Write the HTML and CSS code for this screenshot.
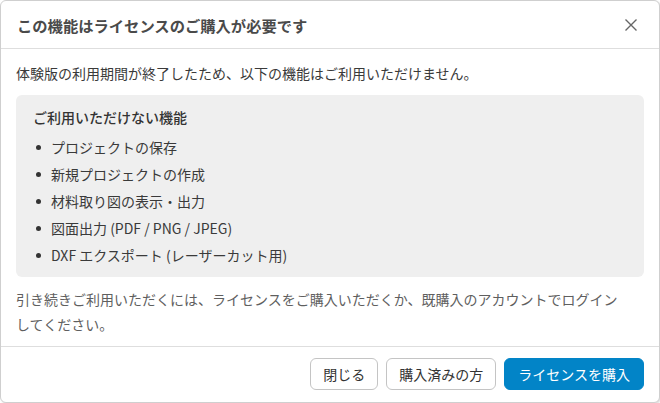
FILE: index.html
```html
<!DOCTYPE html>
<html lang="ja">
<head>
<meta charset="UTF-8">
<meta name="viewport" content="width=device-width, initial-scale=1.0">
<title>ライセンスのご購入</title>
<link rel="stylesheet" href="styles.css">
</head>
<body>
<div class="dialog">
    <div class="dialog-header">
        <h2>この機能はライセンスのご購入が必要です</h2>
        <button class="close" aria-label="閉じる">
            <svg width="14" height="14" viewBox="0 0 14 14">
                <path d="M1.5 1.5 L12.5 12.5 M12.5 1.5 L1.5 12.5" stroke="#666" stroke-width="1.4" fill="none"/>
            </svg>
        </button>
    </div>
    <div class="dialog-body">
        <p class="lead">体験版の利用期間が終了したため、以下の機能はご利用いただけません。</p>
        <div class="locked">
            <h3>ご利用いただけない機能</h3>
            <ul>
                <li>プロジェクトの保存</li>
                <li>新規プロジェクトの作成</li>
                <li>材料取り図の表示・出力</li>
                <li>図面出力 (PDF / PNG / JPEG)</li>
                <li>DXF エクスポート (レーザーカット用)</li>
            </ul>
        </div>
        <p class="note">引き続きご利用いただくには、ライセンスをご購入いただくか、既購入のアカウントでログインしてください。</p>
    </div>
    <div class="dialog-footer">
        <button class="btn">閉じる</button>
        <button class="btn">購入済みの方</button>
        <button class="btn primary">ライセンスを購入</button>
    </div>
</div>
</body>
</html>
```

FILE: styles.css
```css
html, body {
    margin: 0;
    height: 100%;
    background-color: #fff;
    font-family: "Noto Sans CJK JP", "Noto Sans", sans-serif;
    color: #3f3f3f;
}

.dialog {
    box-sizing: border-box;
    height: 100%;
    display: flex;
    flex-direction: column;
    border: 1px solid #cfcfcf;
    border-radius: 6px;
    background: #fff;
    box-shadow: 1px 1px 2px rgba(0,0,0,0.15);
}

.dialog-header {
    display: flex;
    justify-content: space-between;
    align-items: center;
    height: 47px;
    padding: 0 15px 0 16px;
    border-bottom: 1px solid #dedede;
}

.dialog-header h2 {
    margin: 0;
    font-size: 15.3px;
    font-weight: 700;
    color: #4a4a4a;
}

.close {
    border: none;
    background: none;
    padding: 0;
    width: 14px;
    height: 14px;
    margin-right: 6px;
    cursor: pointer;
}

.dialog-body {
    flex: 1;
    padding: 12px 15px 0;
    font-size: 14px;
}

.lead {
    margin: 0 0 10px;
    line-height: 24px;
    color: #3a3a3a;
}

.locked {
    background-color: #efefef;
    border-radius: 6px;
    padding: 11px 17px 8px;
}

.locked h3 {
    margin: 0 0 6px;
    font-size: 14px;
    font-weight: 500;
    line-height: 22px;
    color: #333;
}

.locked ul {
    list-style: none;
    margin: 0;
    padding: 0;
}

.locked li {
    position: relative;
    padding-left: 18px;
    line-height: 27px;
    color: #3a3a3a;
}

.locked li::before {
    content: "";
    position: absolute;
    left: 3px;
    top: 11px;
    width: 5px;
    height: 5px;
    border-radius: 50%;
    background-color: #333;
}

.note {
    margin: 10px 14px 0 0;
    line-height: 25px;
    color: #5f5f5f;
}

.dialog-footer {
    display: flex;
    justify-content: flex-end;
    gap: 8px;
    padding: 11px 15px 12px;
    border-top: 1px solid #dedede;
}

.btn {
    height: 32px;
    padding: 0 12px;
    font-family: inherit;
    font-size: 14px;
    color: #333;
    background-color: #fff;
    border: 1px solid #c4c4c4;
    border-radius: 6px;
    cursor: pointer;
}

.btn.primary {
    padding: 0 13px;
    color: #fff;
    background-color: #0284c7;
    border-color: #0284c7;
}
```
